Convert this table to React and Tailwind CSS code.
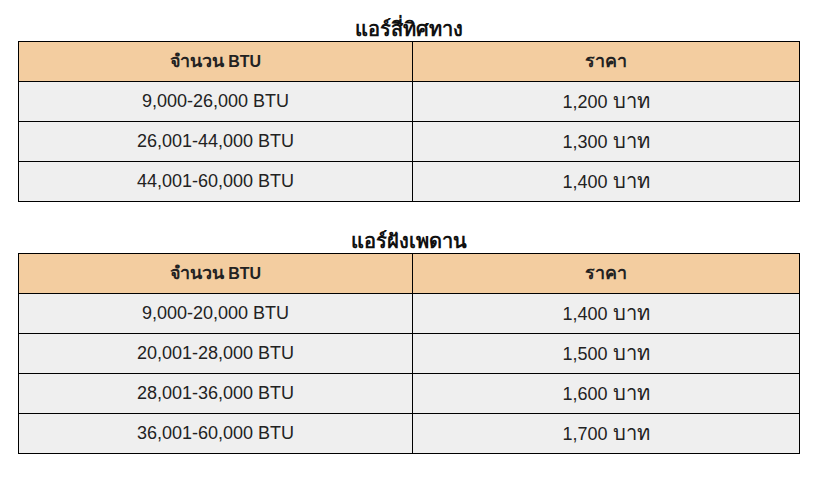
import React from "react";

const tables = [
  {
    title: "แอร์สี่ทิศทาง",
    rows: [
      ["9,000-26,000 BTU", "1,200"],
      ["26,001-44,000 BTU", "1,300"],
      ["44,001-60,000 BTU", "1,400"],
    ],
  },
  {
    title: "แอร์ฝังเพดาน",
    rows: [
      ["9,000-20,000 BTU", "1,400"],
      ["20,001-28,000 BTU", "1,500"],
      ["28,001-36,000 BTU", "1,600"],
      ["36,001-60,000 BTU", "1,700"],
    ],
  },
];

// thai glyphs in the fallback font come out small, so bump them a bit
const Th = ({ children }) => <span className="text-[1.12em]">{children}</span>;

const PriceTable = ({ title, rows }) => {
  return (
    <div className="w-[782px]">
      <h2 className="h-[24px] text-center text-[20px] leading-[24px] font-bold text-[#111]">
        {title}
      </h2>
      <table className="w-full border-collapse border border-black text-[18px] text-[#222]">
        <thead>
          <tr className="bg-[#f3cda0]">
            <th className="w-[394px] h-[40px] border border-black p-0 text-[16px] font-bold">
              <Th>จำนวน</Th> BTU
            </th>
            <th className="h-[40px] border border-black p-0 text-[16px] font-bold">
              <Th>ราคา</Th>
            </th>
          </tr>
        </thead>
        <tbody>
          {rows.map((r) => (
            <tr key={r[0]} className="bg-[#efefef]">
              <td className="h-[40px] border border-black p-0 text-center">{r[0]}</td>
              <td className="h-[40px] border border-black p-0 text-center">
                {r[1]} <Th>บาท</Th>
              </td>
            </tr>
          ))}
        </tbody>
      </table>
    </div>
  );
};

export default function App() {
  return (
    <div
      className="w-[817px] h-[477px] bg-white pl-[18px] pt-[17px] flex flex-col gap-[27px]"
      style={{ fontFamily: '"Liberation Sans", Arial, sans-serif' }}
    >
      {tables.map((t) => (
        <PriceTable key={t.title} {...t} />
      ))}
    </div>
  );
}
